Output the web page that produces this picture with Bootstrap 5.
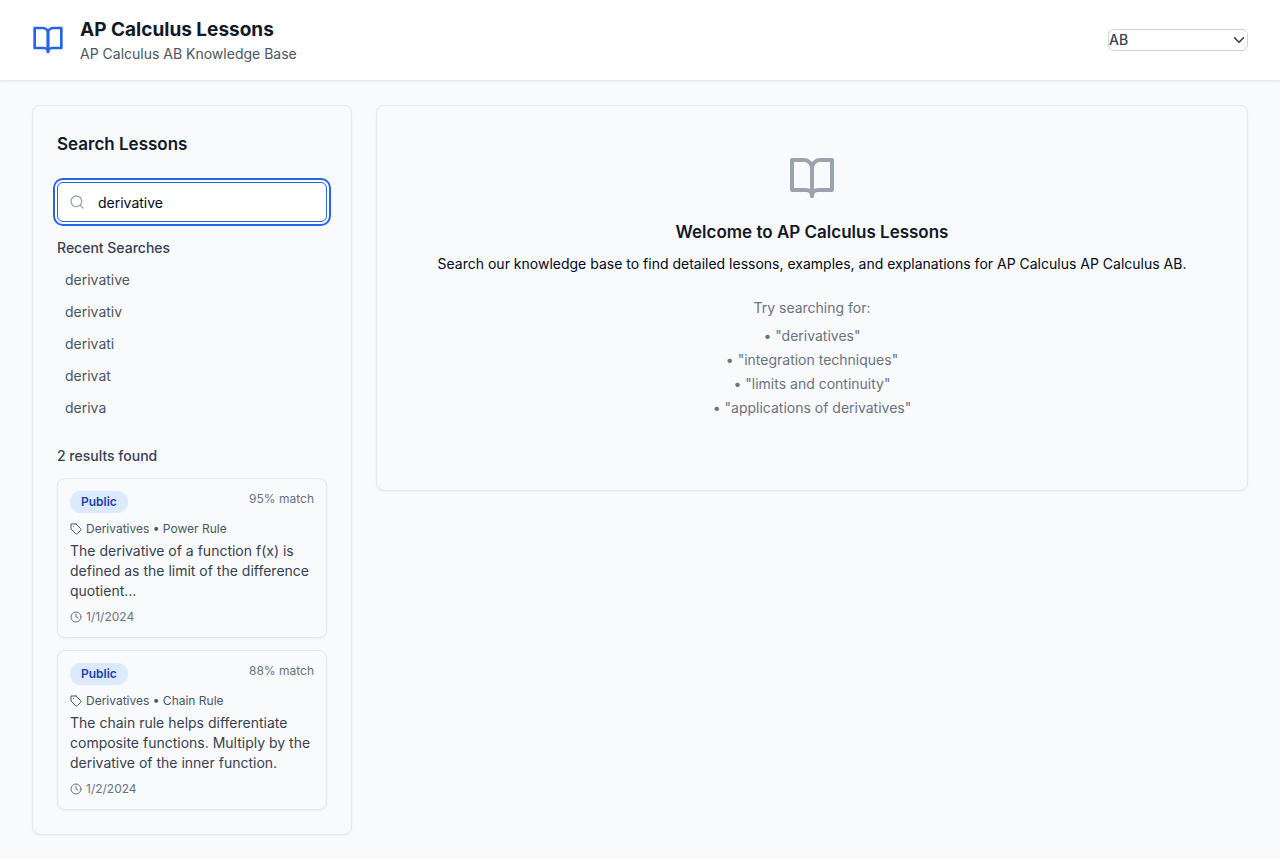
<!DOCTYPE html>
<html lang="en">
<head>
<meta charset="utf-8">
<meta name="viewport" content="width=device-width, initial-scale=1">
<title>AP Calculus Lessons</title>
<link href="https://cdn.jsdelivr.net/npm/bootstrap@5.3.0/dist/css/bootstrap.min.css" rel="stylesheet">
<style>
body { font-family: Inter, "Liberation Sans", sans-serif; font-size: 14px; line-height: 20px; color: #020817; background: #f9fafb; }
.page-head { padding: 16px 32px; border-bottom: 1px solid #e5e7eb; box-shadow: 0 1px 2px rgba(0,0,0,.05); }
.page-head h1 { font-size: 19px; line-height: 28px; font-weight: 700; color: #111827; }
.subtitle { color: #4b5563; }
.course-select { width: 140px; height: 22px; padding: 0 24px 0 0; font-size: 14px; line-height: 20px; font-weight: 500; color: #374151; border: 1px solid #d1d5db; border-radius: 6px; background-position: right 2px center; background-size: 12px 12px; }
.layout { padding: 24px 32px; gap: 24px; }
.side { width: 320px; }
.panel { border: 1px solid #e5e7eb; border-radius: 8px; background: #f9fafb; box-shadow: 0 1px 2px rgba(0,0,0,.05); }
.section-title { font-size: 17px; line-height: 28px; font-weight: 600; color: #111827; }
.query { height: 40px; padding: 8px 12px 8px 40px; font-size: 14px; line-height: 20px; border-radius: 6px; }
.query, .query:focus { color: #020817; border: 1px solid #2563eb; box-shadow: 0 0 0 2px #fff, 0 0 0 4px #2563eb; }
.search-icon { left: 12px; top: 12px; color: #9ca3af; }
.minor-title { font-size: 14px; line-height: 20px; font-weight: 500; color: #374151; }
.recent-list { padding: 6px 0; margin-bottom: 16px; }
.recent { display: block; width: 100%; padding: 6px 8px; border: 0; border-radius: 4px; background: none; text-align: left; color: #4b5563; }
.recent:hover { background: #f3f4f6; }
.results { gap: 12px; }
.result { padding: 12px; }
.tag-pill { padding: 3px 11px; border-radius: 11px; font-size: 12px; line-height: 16px; font-weight: 600; color: #1e40af; background: #dbeafe; }
.fine { font-size: 12px; line-height: 16px; color: #6b7280; }
.topic { color: #4b5563; }
.excerpt { color: #374151; }
.welcome { padding: 48px 24px; }
.book-lg { color: #9ca3af; }
.book-sm { color: #2563eb; }
.hints { color: #6b7280; }
@media (max-width: 767px) { .side { width: 100%; } }
</style>
</head>
<body>
<svg class="d-none" aria-hidden="true">
  <symbol id="book" viewBox="0 0 24 24" fill="none" stroke="currentColor" stroke-width="2" stroke-linecap="round" stroke-linejoin="round"><path d="M2 3h6a4 4 0 0 1 4 4v14a3 3 0 0 0-3-3H2z"/><path d="M22 3h-6a4 4 0 0 0-4 4v14a3 3 0 0 1 3-3h7z"/></symbol>
  <symbol id="search" viewBox="0 0 24 24" fill="none" stroke="currentColor" stroke-width="2" stroke-linecap="round" stroke-linejoin="round"><circle cx="11" cy="11" r="8"/><path d="m21 21-4.300-4.300"/></symbol>
  <symbol id="tag" viewBox="0 0 24 24" fill="none" stroke="currentColor" stroke-width="2" stroke-linecap="round" stroke-linejoin="round"><path d="M12 2H2v10l9.290 9.290c.94.94 2.480.94 3.420 0l6.580-6.580c.94-.94.94-2.480 0-3.420L12 2Z"/><path d="M7 7h.01"/></symbol>
  <symbol id="clock" viewBox="0 0 24 24" fill="none" stroke="currentColor" stroke-width="2" stroke-linecap="round" stroke-linejoin="round"><circle cx="12" cy="12" r="10"/><path d="M12 6v6l4 2"/></symbol>
</svg>

<header class="page-head bg-white d-flex align-items-center justify-content-between">
  <div class="d-flex align-items-center gap-3">
    <svg class="book-sm" width="32" height="32" aria-hidden="true"><use href="#book"/></svg>
    <div>
      <h1 class="mb-0">AP Calculus Lessons</h1>
      <p class="subtitle mb-0">AP Calculus AB Knowledge Base</p>
    </div>
  </div>
  <select class="form-select course-select" aria-label="Course">
    <option selected>AB</option>
    <option>BC</option>
  </select>
</header>

<main class="layout d-flex flex-column flex-md-row align-items-md-start">
  <aside class="side panel p-4 flex-shrink-0">
    <h2 class="section-title mb-4">Search Lessons</h2>
    <div class="position-relative mb-3">
      <svg class="search-icon position-absolute" width="16" height="16" aria-hidden="true"><use href="#search"/></svg>
      <input type="text" class="form-control query" value="derivative" aria-label="Search lessons">
    </div>
    <h3 class="minor-title mb-0">Recent Searches</h3>
    <div class="recent-list">
      <button type="button" class="recent">derivative</button>
      <button type="button" class="recent">derivativ</button>
      <button type="button" class="recent">derivati</button>
      <button type="button" class="recent">derivat</button>
      <button type="button" class="recent">deriva</button>
    </div>
    <div class="results d-grid">
      <h3 class="minor-title mb-0">2 results found</h3>
      <article class="panel result">
        <div class="d-flex justify-content-between align-items-start mb-2">
          <span class="tag-pill">Public</span><span class="fine">95% match</span>
        </div>
        <div class="fine topic d-flex align-items-center gap-1 mb-1"><svg width="12" height="12" aria-hidden="true"><use href="#tag"/></svg>Derivatives • Power Rule</div>
        <p class="excerpt mb-2">The derivative of a function f(x) is defined as the limit of the difference quotient...</p>
        <div class="fine d-flex align-items-center gap-1"><svg width="12" height="12" aria-hidden="true"><use href="#clock"/></svg>1/1/2024</div>
      </article>
      <article class="panel result">
        <div class="d-flex justify-content-between align-items-start mb-2">
          <span class="tag-pill">Public</span><span class="fine">88% match</span>
        </div>
        <div class="fine topic d-flex align-items-center gap-1 mb-1"><svg width="12" height="12" aria-hidden="true"><use href="#tag"/></svg>Derivatives • Chain Rule</div>
        <p class="excerpt mb-2">The chain rule helps differentiate composite functions. Multiply by the derivative of the inner function.</p>
        <div class="fine d-flex align-items-center gap-1"><svg width="12" height="12" aria-hidden="true"><use href="#clock"/></svg>1/2/2024</div>
      </article>
    </div>
  </aside>

  <section class="panel welcome flex-grow-1 text-center">
    <svg class="book-lg d-block mx-auto mb-3" width="48" height="48" aria-hidden="true"><use href="#book"/></svg>
    <h2 class="section-title mb-2">Welcome to AP Calculus Lessons</h2>
    <p class="mb-4">Search our knowledge base to find detailed lessons, examples, and explanations for AP Calculus AP Calculus AB.</p>
    <div class="hints mb-4">
      <p class="mb-2">Try searching for:</p>
      <ul class="list-unstyled d-grid gap-1 mb-0">
        <li>• "derivatives"</li>
        <li>• "integration techniques"</li>
        <li>• "limits and continuity"</li>
        <li>• "applications of derivatives"</li>
      </ul>
    </div>
  </section>
</main>
<script src="https://cdn.jsdelivr.net/npm/bootstrap@5.3.0/dist/js/bootstrap.bundle.min.js"></script>
</body>
</html>
